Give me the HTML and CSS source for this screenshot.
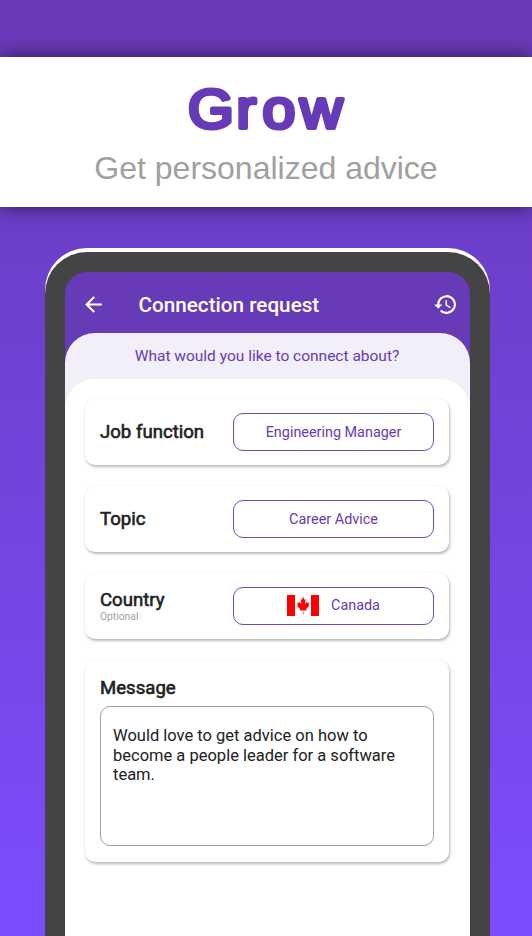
FILE: index.html
```html
<!DOCTYPE html>
<html lang="en">
<head>
<meta charset="utf-8">
<title>Grow</title>
<link rel="stylesheet" href="styles.css">
</head>
<body>
<header class="banner">
  <h1 class="banner-title"><svg class="wordmark" viewBox="0 0 160 64"><text transform="scale(1.07 1)" x="1.8 47.2 71.5 106.6" y="53.2">Grow</text></svg></h1>
  <p class="banner-subtitle">Get personalized advice</p>
</header>
<main class="phone">
  <div class="screen">
    <div class="app-bar">
      <svg class="back" viewBox="0 0 24 24"><path d="M20 11H7.83l5.59-5.59L12 4l-8 8 8 8 1.41-1.41L7.83 13H20z"/></svg>
      <h2 class="app-title">Connection request</h2>
      <svg class="history" viewBox="0 0 24 24"><path d="M13 3a9 9 0 0 0-9 9H1l3.89 3.89.07.14L9 12H6a7 7 0 1 1 2.06 4.94l-1.42 1.42A9 9 0 1 0 13 3zm-1 5v5l4.28 2.54.72-1.21-3.5-2.08V8z"/></svg>
    </div>
    <div class="prompt">
      <p class="prompt-text">What would you like to connect about?</p>
      <div class="sheet">
        <section class="card row">
          <h3 class="label">Job function</h3>
          <button class="choice">Engineering Manager</button>
        </section>
        <section class="card row">
          <h3 class="label">Topic</h3>
          <button class="choice">Career Advice</button>
        </section>
        <section class="card row">
          <div class="country">
            <h3 class="label">Country</h3>
            <p class="optional">Optional</p>
          </div>
          <button class="choice">
            <svg class="flag" viewBox="0 0 9600 4800" preserveAspectRatio="none"><path fill="#fff" d="M2400 0h4800v4800H2400z"/><path fill="red" d="M0 0h2400v4800H0zM7200 0h2400v4800H7200zM4755 4430l45-863a95 95 0 0 0-111-98l-859 151 116-320a65 65 0 0 0-20-73l-941-762 212-99a65 65 0 0 0 34-79l-186-572 542 115a65 65 0 0 0 73-38l105-247 423 454a65 65 0 0 0 111-57l-204-1052 327 189a65 65 0 0 0 91-27l332-652 332 652a65 65 0 0 0 91 27l327-189-204 1052a65 65 0 0 0 111 57l423-454 105 247a65 65 0 0 0 73 38l542-115-186 572a65 65 0 0 0 34 79l212 99-941 762a65 65 0 0 0-20 73l116 320-859-151a95 95 0 0 0-111 98l45 863z"/></svg>
            <span>Canada</span>
          </button>
        </section>
        <section class="card message">
          <h3 class="label">Message</h3>
          <div class="message-box">Would love to get advice on how to become a people leader for a software team.</div>
        </section>
      </div>
    </div>
  </div>
</main>
</body>
</html>
```
FILE: styles.css
```css
* { box-sizing: border-box; }

body {
  margin: 0;
  height: 936px;
  overflow: hidden;
  padding-top: 57px;
  background: linear-gradient(#673ab7, #7c4dff);
  font-family: Roboto, sans-serif;
}

h1, h2, h3, p { margin: 0; }

.banner {
  height: 150px;
  padding-top: 18px;
  background: #fff;
  box-shadow: 0 0 20px rgba(0, 0, 0, .6);
  font-family: "Liberation Sans", Arial, sans-serif;
  text-align: center;
}

.banner-title {
  height: 70px;
  font-weight: 400;
}

.wordmark {
  display: block;
  width: 160px;
  height: 64px;
  margin: 0 auto;
  overflow: visible;
}

.wordmark text {
  fill: #673ab7;
  stroke: #673ab7;
  stroke-width: 4.2px;
  stroke-linejoin: round;
  font-size: 55px;
}

.banner-subtitle {
  color: #a0a0a0;
  font-size: 32px;
  line-height: 46px;
}

.phone {
  width: 445px;
  height: 720px;
  margin: 45px 0 0 45px;
  padding: 20px 20px 0;
  border-radius: 42px 42px 0 0;
  background: #444;
  box-shadow: 0 -4px #fff;
}

.screen {
  height: 700px;
  overflow: hidden;
  border-radius: 22px 22px 0 0;
  background: #673ab7;
}

.app-bar {
  display: flex;
  align-items: center;
  height: 61px;
  padding: 3px 12px 0 16px;
  color: #fff;
}

.back, .history {
  width: 25px;
  height: 25px;
  fill: currentColor;
}

.app-title {
  margin: 1px auto 0 32.5px;
  font-size: 20.7px;
  font-weight: 500;
}

.prompt {
  height: 700px;
  border-radius: 30px 30px 0 0;
  background: #f2eff9;
}

.prompt-text {
  height: 45.5px;
  padding-right: 1px;
  color: #673ab7;
  font-size: 15.5px;
  line-height: 46px;
  text-align: center;
}

.sheet {
  display: flex;
  flex-direction: column;
  gap: 20.9px;
  height: 655px;
  padding: 20.7px 21px 0 20px;
  border-radius: 30px 30px 0 0;
  background: #fff;
}

.card {
  border-radius: 10px;
  background: #fff;
  box-shadow: 1px 2px 3px rgba(0, 0, 0, .27), 0 0 2px rgba(0, 0, 0, .08);
}

.row {
  display: flex;
  align-items: center;
  justify-content: space-between;
  height: 66px;
  padding: 0 15px;
}

.label {
  color: #212121;
  font-size: 18.6px;
  font-weight: 400;
  line-height: 22px;
  -webkit-text-stroke: .6px #212121;
}

.country {
  padding-top: 2px;
}

.country .label { line-height: 21px; }

.optional {
  color: #a0a0a0;
  font-size: 10.3px;
  line-height: 12px;
}

.choice {
  display: flex;
  align-items: center;
  justify-content: center;
  gap: 12px;
  width: 201px;
  height: 38px;
  padding: 0;
  border: 1px solid #7548c2;
  border-radius: 10px;
  background: #fff;
  color: #673ab7;
  font: 14.4px Roboto, sans-serif;
}

.flag {
  width: 32px;
  height: 21px;
}

.message {
  height: 202px;
  padding: 17px 15px 0;
}

.message-box {
  height: 140px;
  margin-top: 7px;
  padding: 19px 12px;
  border: 1px solid #a0a0a0;
  border-radius: 10px;
  color: #212121;
  font-size: 16.5px;
  line-height: 19.8px;
}
```
